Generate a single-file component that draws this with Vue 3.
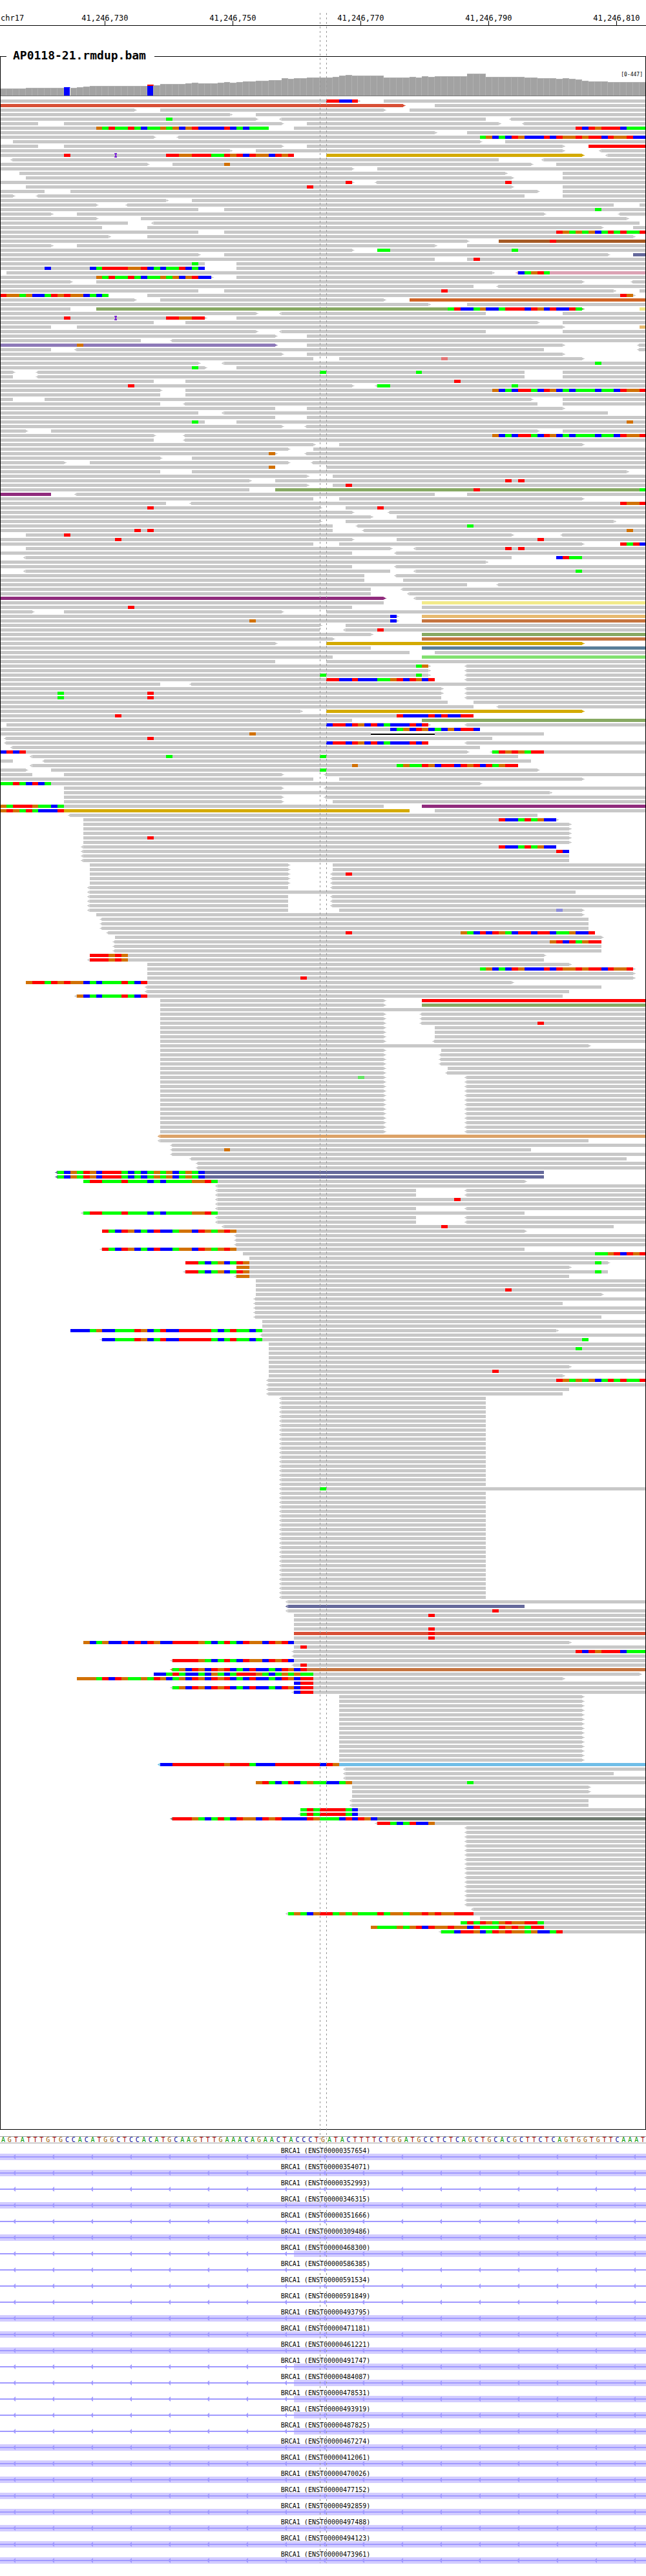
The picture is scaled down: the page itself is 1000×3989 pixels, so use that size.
<script setup>
const BASES = 101
const FIRST_POSITION = 41246714

const ticks = [16, 36, 56, 76, 96].map((col) => ({
  col,
  label: (FIRST_POSITION + col).toLocaleString('en-US'),
}))

// Coverage heights as [height, number of bases]
const coverage = [
  [11, 4], [12, 6], [13, 1], [12, 1], [13, 1], [14, 1], [15, 9], [17, 1], [16, 1], [18, 4],
  [19, 1], [20, 1], [19, 3], [20, 1], [21, 1], [20, 1], [21, 1], [22, 2], [23, 2], [24, 2],
  [27, 1], [26, 1], [27, 2], [28, 4], [29, 1], [31, 1], [32, 1], [31, 5], [28, 4], [29, 1],
  [28, 1], [30, 1], [29, 1], [30, 5], [34, 3], [29, 6], [28, 2], [27, 3], [26, 1], [27, 1],
  [26, 1], [25, 1], [23, 1], [22, 3], [21, 6],
].flatMap(([height, count]) => Array(count).fill(height))

const variants = { 10: 'variant-low', 23: 'variant-high' }

// One line per packed row: [n*] reads, each "[<]start-end[>][Tint][,pos+bases]..."
const packed = `
0-56>,51rrbbr 60-101
0-63>T 68-101
0-21> 25-60> 64-101
0-36> 40-101
0-40>,26g <44-76 <80-101
0-6 10-44> 48-78> <82-101
0-42,15ogrggrgbggogoborbbbbrbgbggg 46-101,90rbrorrrbggg
0-68> 73-101
0-24> <28-101,75gobgbrobbbrbroororrbroorbb
2-75> 79-101
0-6 10-44> 48-88> 92-101R
0-36> 40-88> <94-101
0-46,10r,18i,26rroorrrggrorbroobror 51-91>Y <95-101
<2-78 <85-101
0-23> 27-83>,35o 87-101
0-55> 59-101
3-79> 88-101
4-80> 88-101
0-55>,54r <59-101,79r
4-80>,48r 88-101
0-7 11-84> 88-101
0-2> <6-82 88-101
0-26> 30-101
0-15> <20-96 100-101
0-31 35-101,93g
0-8> 12-85> <97-101
0-15> 22-98>
0-20 <24-100
0-16 23-94> 99-101
0-31 35-101,87rogogobgrgrggr
0-17> 23-99>
0-73> 78-101N,86r
0-8> 12-68> 73-101
0-55> 59-101,59gg,80g
0-31> 35-95> 99-101S
0-68 73-101,74r
0-32,30g 37-101
0-32,7b,14bgrrrroorbgbggrbgb 37-101
1-77> <81-101P,81bgorg
0-33>,15ogrggrgbggogoborbb 37-101
0-11> 15-91> <99-101
0-74 <78-101
0-31 35-96>,69r 100-101
0-17,0roogobbgroroobgbg 23-99>,97ro
0-21> 25-60> 64-101O
0-67> 73-101
0-11 15-91>G,70grbbgobbgrrrbrobrbbrg 100-101K
0-40> <44-76 88-101
0-32>,10r,18i,26rroorr 37-101
0-24 29-84> 88-101
0-8 12-88> 100-101A
0-40> <44-76 88-101
0-43> 48-101
0-22 <27-101
0-43>V,12o 48-88> <100-101
0-8 <12-85 <100-101
0-44> 48-88>
0-49 53-91>,69d
0-31> <35-101,93g
0-32>,30g 37-101
0-2> <6-82,50g,65g 88-101
0-2 <6-82 88-101
0-24 29-101,71r
0-55>,20r <59-101,59gg,80g
0-25> 29-101,77obgbrrgbrobgbgggbggbroor
0-25 29-101
0-2 7-83> 88-101
0-25 <29-84 88-101
0-43 48-88>
0-31 <35-95
0-43 48-101
0-32,30g 37-101,98o
0-44> <48-101
0-4> 8-84> 88-101
0-24> <29-101,77obgbrrgbrobgbgggbggbroor
0-24 <29-101
0-49> 53-91>
0-45> 49-101
0-43>,42o <48-101
0-25> 30-101
0-10> 14-45> <49-101
0-43,42o 51-101
0-25 30-98>
0-48> 52-101
0-39> 43-101,79r,81r
0-48> 52-101,54r
0-39 43-101G,74r,100g
0-8M <12-68 73-101
0-49 53-91>
0-26 <30-101,97roor
0-50>,23r 54-101,59r
0-55> <61-101
0-58> 62-101
0-50> 54-96>
0-52 <56-101,73g
0-52,21r,23r <57-101,98o
4-80>,10r <88-101
0-55>,18r 62-101,84r
0-49 53-91> 97-101,97rgrb
4-61> <65-101,79r,81r
0-55 <62-101
<4-80 87-101,87brgg
0-76>
0-55 <62-101
<4-61 <65-101,90g
0-57 <62-101
0-57 63-101
0-73 <78-101
0-58 <63-101
0-58 <64-101
0-60>M <65-101
0-60 66-101K
0-55,20r 66-101
0-5> 10-44> 51-101
0-62>,61b 66-101A
0-62>,39o,61b 66-101C
0-50> 54-101
0-50 <54-101,59r
0-58> 66-101G
0-52> 66-101C
0-43> 51-91>Y
0-58 66-101E
0-64 68-101
0-52 66-101L
0-43 51-101
0-67>,65go <73-101
0-67> <73-101
0-67>,50g,65g <73-101
0-68,51rrbbrbbbggorbrobr <73-101
0-25 <30-101
0-69> <73-101
0-69>,9g,23r <73-101
0-69,9g,23r <73-101
0-70 74-101
0-74 <78-101
0-47> 51-91>Y
0-74,18r,62rbbbbrbrbbrr
0-55 66-101G
1-67>,51brrbrobrbgbbbrbr <73-101
0-75,61bgobrobgbobrrb
0-58,39o 58-68D 68-85
<1-77,23r
<1-67,51brrbrobrbgbbbrbr <73-101
<2-75
0-73>,0brbr <77-101,77grorogrr
<5-81,26g,50g
0-2 <7-83
<5-81,55o,62goggrobrrbrorbrgorr
0-4> 8-84>,50g
0-5 10-44> <51-101
0-49 53-91>
0-75>,0ggrgbrbg
10-44> <51-101
10-86>
10-44> <51-101
10-44> 52-101
0-60,0ogrrroggbg 66-101M
0-64Y,0orogrgbbbr 68-101
<11-84
13-87>,78rbbgrgobb
3* 13-89>
13-89>,23r
13-89>
<13-87,78rbbgrgobb
<13-89,87rb
2* <13-89
2* 14-45> 52-101
14-45> <52-101,54r
2* 14-45> <52-101
<14-45 <52-101
<14-90
3* <14-45 <52-101
<14-45 53-91>,87p
15-91>
3* <16-92
<17-93,54r,72ogbrbrogbrrbrrbggobbr
18-94>
<18-94,86orbrgorr
2* <18-94
14-85>,14rrroro
<14-85,14rrroro
23-89>
23-99>,75gobgbrobbbrbroororrbroor
23-99>
23-99>,47r
4-80>,4orrgroroobgbgggrgbr
<23-94
<23-89
<12-88,12obgbgggrgbr
25-60> 66-101R
25-60> 66-101G
25-101
2* 25-60> <66-101
25-60> <66-101,84r
3* 25-60> 68-101
25-60> <68-101
25-92>
25-60> 69-101
3* 25-60> <69-101
25-60> 70-101
25-60> <70-101
25-60>,56m <73-101
12* 25-60> <73-101
<25-101W
<25-92
<27-101
<27-83,35o
<27-101
<30-98
2* <31-101
2* <9-85S,9gbogrobrrrgbgbgogobgogb
13-82>,13grrgggrgggbgbggggoorg
<34-101
2* <34-65 <73-101
<34-101,71r
<34-101
<34-65 <73-101
<13-82,13grrgggrgggbgbggggoorg
2* <34-65 <73-101
<35-96,69r
16-82>,16rgbrobgbrbbgoobrogoro
3* <37-101
<16-82,16rgbrobgbrbbgoobrogoro
38-101,93ggorbror
39-101
29-95>,29rrgbgobgro,93g
37-89>,37oo
<29-95,29rrgbgobgro,93g
<37-89,37oo
2* 40-101
40-101,79r
40-94>
<40-101
<40-88
2* <40-101
<40-94
2* 41-101
11-87>,11bbbgobbgggrobgrbbrrrrrgbgrggbg
<41-101
<16-92,16bbgggrobgrbbrrrrrgbgrggbg,91g
42-101
42-101,90g
3* 42-101
42-89>
42-101,77r
42-88>
<42-101,87rogogobgrgrggr
<42-101
<42-89
<42-88
20* <44-76
<44-101,50g
24* <44-76
<45-101
<45-82S
<45-101,77r
46-101,67r
2* 46-101
46-101,67r
46-101T,67r
46-101,67r
13-89>,13obgobbrbrbrobbrrrrogbgrgbroobrorb
46-101,47r
<46-101,90rbrorrrbggg
<46-101
<27-101,27rrrrogbgrgbroobrorb
<46-101,47r
<27-101C,27gobrobrorbgbrbbgbrobr
24-100>,24bbgrgbbgbogbgrrrogbgogogg
12-88>,12ooogrbroggogrobgobrobrorbgbrbbgbrobrr
46-101,46brr
<27-101,27gobrobrorbgbrbbgbrobrr
<46-101,46brr
15* 53-91>
<25-101B,25bbrrrrrrrrorrrgbbbrrrrrrrbro
<54-101
<54-96
<54-101
40-101,40orgbgrbgoggbbgo,73g
2* 55-92>
55-101
2* <55-92
47-101,47grgrrrrgb
<47-101,47grgrrrrgb
<27-101H,27rrrogbgrgbroobrorbbbbrogggbrbrob
<59-101,59rrgbgrbbo
18* <73-101
<74-101
<45-101,45gogborrgogogggrgoogoororoorrr
75-101
72-101,72grgrogoroorrg
58-101,58ogggogorbrooroobrgggrorogrr
<69-101,69ggbrrobgroroogobbgr
`

const tints = {
  T: 'tomato', R: 'red', Y: 'gold', N: 'brown', S: 'slate', P: 'pink', O: 'rust', G: 'olive',
  K: 'khaki', A: 'sand', V: 'violet', M: 'plum', C: 'sienna', E: 'steel', L: 'lime', W: 'tan',
  B: 'sky', H: 'moss', D: 'deletion',
}

function parseRead(token) {
  const [range, ...marks] = token.split(',')
  const [, reverse, start, end, forward, tint] = range.match(/^(<?)(\d+)-(\d+)(>?)([A-Z]?)$/)
  const items = [{
    from: +start,
    to: +end,
    kind: ['read', tints[tint], { reverse: reverse, forward: forward }],
  }]
  for (const mark of marks) {
    const [, pos, bases] = mark.match(/^(\d+)([a-z]+)$/)
    let from = +pos
    for (const run of bases.match(/(.)\1*/g)) {
      items.push({ from, to: from + run.length, kind: ['base', 'base-' + run[0]] })
      from += run.length
    }
  }
  return items
}

const rows = packed.trim().split('\n').flatMap((line) => {
  const [, repeat, reads] = line.match(/^(?:(\d+)\* )?(.*)$/)
  return Array(+(repeat || 1)).fill(reads.split(' ').flatMap(parseRead))
})

const sequence = (
  'AGTATTTGTGCCACATGGCTCCACATGCAAGTTTGAAACAGAACTACCCT' +
  'GATACTTTTCTGGATGCCTCTCAGCTGCACGCTTCTCAGTGGTGTTCAAAT'
).split('')

// exonStart: first base covered by the exon, or null when only intron is in view
const transcripts = [
  ['357654', 0], ['354071', 0], ['352993', null], ['346315', 0], ['351666', null],
  ['309486', 0], ['468300', 46], ['586385', null], ['591534', null], ['591849', null],
  ['493795', 0], ['471181', 0], ['461221', 0], ['491747', 46], ['484087', 46],
  ['478531', 46], ['493919', 46], ['487825', 46], ['467274', 0], ['412061', 0],
  ['470026', 0], ['477152', 0], ['492859', 0], ['497488', 0], ['494123', 0],
  ['473961', 0],
].map(([id, exonStart]) => ({ name: `BRCA1 (ENST00000${id})`, exonStart }))

const span = (from, to) => ({ gridColumn: `${from + 1} / ${to + 1}` })
</script>

<template>
  <main class="browser">
    <header class="ruler lanes">
      <span class="chromosome">chr17</span>
      <span v-for="tick in ticks" :key="tick.col" class="tick" :style="span(tick.col, tick.col + 1)">
        {{ tick.label }}
      </span>
    </header>

    <section class="alignment">
      <div class="heading">
        <h2>AP0118-21.rmdup.bam</h2>
      </div>
      <div class="frame">
        <div class="coverage lanes">
          <i
            v-for="(height, i) in coverage"
            :key="i"
            :class="['depth', variants[i]]"
            :style="{ height: height + 'px' }"
          ></i>
          <span class="scale">[0-447]</span>
        </div>
        <div class="reads">
          <div v-for="(row, r) in rows" :key="r" class="row lanes">
            <i v-for="(item, k) in row" :key="k" :class="item.kind" :style="span(item.from, item.to)"></i>
          </div>
        </div>
      </div>
    </section>

    <section class="sequence lanes">
      <span v-for="(base, i) in sequence" :key="i" :class="'nt-' + base">{{ base }}</span>
    </section>

    <section class="genes">
      <article v-for="gene in transcripts" :key="gene.name" class="gene">
        <h3>{{ gene.name }}</h3>
        <div class="track lanes">
          <i v-if="gene.exonStart !== null" class="exon" :style="span(gene.exonStart, BASES)"></i>
          <div class="strand"><i v-for="n in 17" :key="n"></i></div>
        </div>
      </article>
    </section>

    <div class="focus lanes">
      <i :style="span(50, 51)"></i>
      <i :style="span(51, 52)"></i>
    </div>
  </main>
</template>

<style>
body {
  margin: 0;
  background: #fff;
}
</style>

<style scoped>
.browser {
  position: relative;
  overflow: hidden;
  padding: 22px 0 19px;
  color: #000;
  font-family: "DejaVu Sans Mono", monospace;
}

.lanes {
  display: grid;
  grid-template-columns: repeat(101, minmax(0, 1fr));
}

/* Ruler */
.ruler {
  border-bottom: 1px solid #000;
  font-size: 12px;
  line-height: 12px;
  white-space: nowrap;
}

.chromosome {
  grid-area: 1 / 1;
  padding-left: 1px;
}

.tick {
  grid-row: 1;
  display: flex;
  flex-direction: column;
  align-items: center;
  padding-right: 2px;
}

.tick::after {
  content: "";
  width: 1px;
  height: 7px;
  margin-top: -2px;
  background: #000;
}

/* Alignment track */
.alignment {
  margin-top: 36px;
}

.heading {
  display: flex;
  align-items: flex-end;
  height: 22px;
}

.heading::before,
.heading::after {
  content: "";
  box-sizing: border-box;
  height: 11px;
  border-top: 1px solid #000;
}

.heading::before {
  width: 10px;
  border-left: 1px solid #000;
}

.heading::after {
  flex: 1;
  border-right: 1px solid #000;
}

h2 {
  margin: 0;
  padding: 0 13px 2px 10px;
  font-size: 18px;
  line-height: 20px;
}

.frame {
  position: relative;
  overflow: hidden;
}

.frame::after {
  content: "";
  position: absolute;
  inset: 0;
  border: solid #000;
  border-width: 0 1px 1px;
}

.coverage {
  position: relative;
  height: 50px;
  align-items: end;
  border-bottom: 1px solid #787878;
}

.depth {
  box-sizing: border-box;
  border: solid #b0b0b0;
  border-width: 1px 1px 0 0;
  background: #a2a2a2;
}

.variant-low {
  border-color: #00f #fff #00f #00f;
  background: #00f;
}

.variant-high {
  border-top: 2px solid #f00;
  border-right-color: #b0b0b0;
  background: #00f;
}

.scale {
  position: absolute;
  top: 13px;
  right: 5px;
  font-size: 8px;
  line-height: 10px;
}

.reads {
  display: flex;
  flex-direction: column;
  gap: 2px;
  padding: 5px 0 304px;
}

.row {
  height: 5px;
}

.read,
.base {
  position: relative;
  grid-row: 1;
  height: 5px;
  background: currentColor;
}

.read {
  color: #c8c8c8;
}

.reverse::before,
.forward::after {
  content: "";
  position: absolute;
  top: 0;
  width: 4px;
  height: 5px;
  background: currentColor;
}

.reverse::before {
  right: 100%;
  clip-path: polygon(4px 0, 3px 0, 3px 1px, 2px 1px, 2px 2px, 0 2px, 0 3px, 2px 3px, 2px 4px, 3px 4px, 3px 5px, 4px 5px);
}

.forward::after {
  left: 100%;
  clip-path: polygon(0 1px, 2px 1px, 2px 2px, 4px 2px, 4px 3px, 2px 3px, 2px 4px, 0 4px);
}

.tomato { color: #d84f36; }
.red { color: #f00; }
.gold { color: #d4aa00; }
.brown { color: #a55a24; }
.slate { color: #65699b; }
.pink { color: #dca2b4; }
.rust { color: #d06426; }
.olive { color: #87a963; }
.khaki { color: #f2ea8a; }
.sand { color: #e7ba70; }
.violet { color: #8d79b8; }
.plum { color: #902c7d; }
.sienna { color: #c5743f; }
.steel { color: #597e99; }
.lime { color: #82e070; }
.tan { color: #dca267; }
.sky { color: #70bee8; }
.moss { color: #6e7a6f; }

.deletion {
  align-self: center;
  height: 2px;
  color: #000;
}

.base-r { color: #f00; }
.base-g { color: #0f0; }
.base-b { color: #00f; }
.base-o { color: #d17105; }
.base-d { color: #e37676; }
.base-p { color: #8c8cdc; }
.base-m { color: #64e664; }

/* Insertion: an I-beam straddling the row */
.base-i {
  justify-self: start;
  width: 4px;
  height: 7px;
  margin: -1px 0 0 -1px;
  color: #7a1fd6;
  clip-path: polygon(0 0, 4px 0, 4px 2px, 3px 2px, 3px 5px, 4px 5px, 4px 7px, 0 7px, 0 5px, 1px 5px, 1px 2px, 0 2px);
}

/* Reference sequence */
.sequence {
  margin-top: 10px;
  border: solid #a0a0a0;
  border-width: 1px 0;
  font-size: 10px;
  line-height: 9px;
  text-align: center;
}

.nt-A { color: #009600; }
.nt-C { color: #000096; }
.nt-G { color: #a05a00; }
.nt-T { color: #a00000; }

/* Transcripts */
.genes {
  margin-top: 1px;
}

h3 {
  margin: 0;
  padding: 6px 0 0 8px;
  font-size: 10px;
  font-weight: normal;
  line-height: 9px;
  text-align: center;
}

.track {
  height: 10px;
}

.exon {
  grid-row: 1;
  background: #d2ccff;
}

.strand {
  grid-area: 1 / 1 / 2 / -1;
  display: flex;
  align-items: center;
  overflow: hidden;
  background: linear-gradient(#a099ff, #a099ff) 0 4px / 100% 2px no-repeat;
}

.strand i {
  flex: none;
  width: 4px;
  height: 8px;
  margin: 0 36px 0 20px;
  background: #a099ff;
  clip-path: polygon(0 50%, 100% 0, 100% 100%);
}

/* Focused base */
.focus {
  position: absolute;
  inset: 20px 0;
  pointer-events: none;
}

.focus i {
  grid-row: 1;
  width: 1px;
  background: repeating-linear-gradient(#969696 0 3px, transparent 3px 7px);
}
</style>
